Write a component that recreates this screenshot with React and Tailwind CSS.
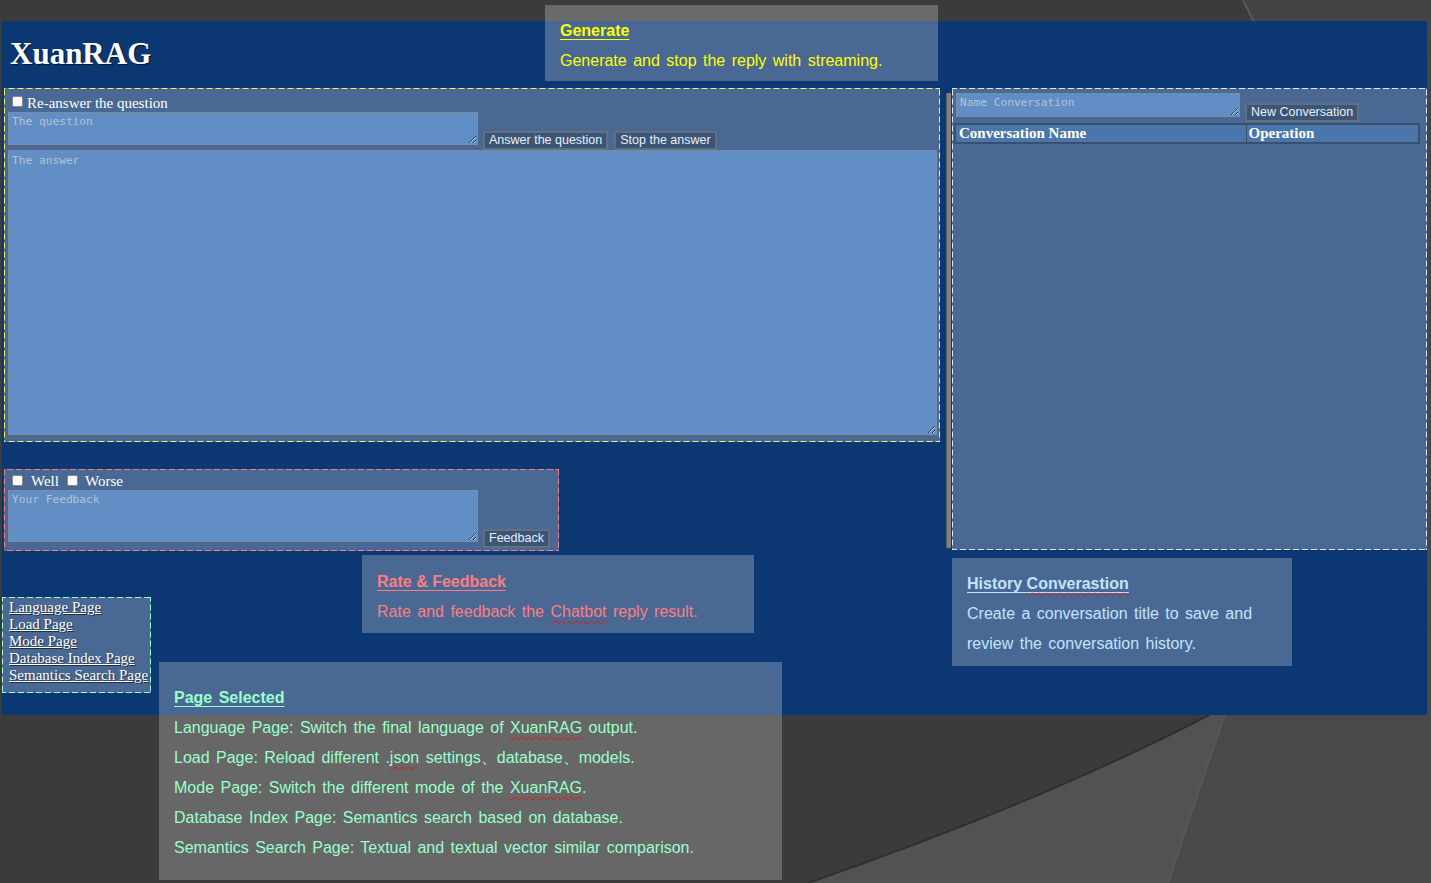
import React from "react";

function Checkbox() {
  return (
    <span className="inline-block w-[11px] h-[11px] bg-white border border-[#8a8a8a] rounded-[2px] shrink-0" />
  );
}

function GrayButton({ children, className }) {
  return (
    <button
      className={
        "h-[19px] px-[4px] bg-[#3b5577] border-2 border-[#636f7e] text-[#e8eef6] font-['Liberation_Sans',Arial,sans-serif] text-[12.5px] leading-none whitespace-nowrap " +
        className
      }
    >
      {children}
    </button>
  );
}

function Wavy({ children }) {
  return (
    <span className="underline decoration-wavy decoration-[#e01818] decoration-1 underline-offset-[3px]">
      {children}
    </span>
  );
}

function SlideBackground() {
  return (
    <svg className="absolute inset-0" width="1431" height="883" viewBox="0 0 1431 883">
      <defs>
        <linearGradient id="rightArc" x1="0" y1="0" x2="0" y2="1">
          <stop offset="0" stopColor="#434343" />
          <stop offset="1" stopColor="#4a4a4a" />
        </linearGradient>
      </defs>
      <rect width="1431" height="883" fill="#3b3b3b" />
      <path d="M 808 883 C 955 832 1100 772 1215 712 L 1431 600 L 1431 883 Z" fill="#525252" />
      <path d="M 808 883 C 955 832 1100 772 1215 712" fill="none" stroke="#303030" strokeWidth="2" />
      <path
        d="M 1243 0 C 1400 300 1330 560 1225 715 Q 1195 800 1168 883 L 1431 883 L 1431 0 Z"
        fill="url(#rightArc)"
      />
      <path
        d="M 1243 0 C 1400 300 1330 560 1225 715 Q 1195 800 1168 883"
        fill="none"
        stroke="#575757"
        strokeWidth="2"
      />
    </svg>
  );
}

const pageLinks = [
  "Language Page",
  "Load Page",
  "Mode Page",
  "Database Index Page",
  "Semantics Search Page"
];

const areaClass =
  "block bg-[#618fc5] border border-[#7a8ca6] font-['DejaVu_Sans_Mono',monospace] text-[11.2px] leading-[13px] px-[3px] text-white placeholder:text-[#b3c2d4] outline-none";

export default function App() {
  return (
    <div className="relative w-[1431px] h-[883px] overflow-hidden bg-[#3b3b3b]">
      <SlideBackground />

      {/* screenshot of the app */}
      <div className="relative mt-[21px] ml-[2px] w-[1425px] h-[694px] bg-[#0b3772] font-['Liberation_Serif',serif] text-white">
        <div className="h-[67px] flex items-center pl-[8px]">
          <h1 className="text-[31px] font-bold [text-shadow:1px_1px_1px_rgba(0,0,0,0.6)]">
            XuanRAG
          </h1>
        </div>

        <div className="flex">
          {/* left column */}
          <div className="w-[938px] pl-[2px] flex flex-col">
            <div className="w-[936px] h-[354px] p-[1px] pl-[4px] [background:linear-gradient(90deg,#f2f25e_6px,transparent_6px)_top/9px_1px_repeat-x,linear-gradient(90deg,#f2f25e_6px,transparent_6px)_bottom/9px_1px_repeat-x,linear-gradient(#f2f25e_6px,transparent_6px)_left/1px_9px_repeat-y,linear-gradient(#f2f25e_6px,transparent_6px)_right/1px_9px_repeat-y,#496994]">
              <label className="flex items-start gap-[4px] ml-[4px] pt-[6px] h-[23px] text-[15px] leading-[17px]">
                <span className="mt-[1px] flex">
                  <Checkbox />
                </span>
                Re-answer the question
              </label>
              <div className="flex h-[38px]">
                <textarea placeholder="The question" className={areaClass + " w-[470px] h-[33px] py-[2px]"} />
                <GrayButton className="mt-[19px] ml-[5px]">Answer the question</GrayButton>
                <GrayButton className="mt-[19px] ml-[6px]">Stop the answer</GrayButton>
              </div>
              <textarea placeholder="The answer" className={areaClass + " w-[929px] h-[285px] py-[3px]"} />
            </div>

            <div className="mt-[27px] w-[555px] h-[82px] p-[1px] pl-[4px] [background:linear-gradient(90deg,#ff7c80_6px,transparent_6px)_top/9px_1px_repeat-x,linear-gradient(90deg,#ff7c80_6px,transparent_6px)_bottom/9px_1px_repeat-x,linear-gradient(#ff7c80_6px,transparent_6px)_left/1px_9px_repeat-y,linear-gradient(#ff7c80_6px,transparent_6px)_right/1px_9px_repeat-y,#496994]">
              <div className="flex items-start ml-[4px] pt-[3px] h-[20px] text-[15px] leading-[17px]">
                <span className="mt-[2px] flex">
                  <Checkbox />
                </span>
                <span className="ml-[8px]">Well</span>
                <span className="mt-[2px] ml-[8px] flex">
                  <Checkbox />
                </span>
                <span className="ml-[7px]">Worse</span>
              </div>
              <div className="flex">
                <textarea placeholder="Your Feedback" className={areaClass + " w-[470px] h-[52px] py-[2px]"} />
                <GrayButton className="mt-[39px] ml-[5px]">Feedback</GrayButton>
              </div>
            </div>

            <div className="mt-[46px] -ml-[2px] w-[149px] h-[96px] pl-[7px] pt-[2px] text-[15px] leading-[17px] [background:linear-gradient(90deg,#99ffcc_6px,transparent_6px)_top/9px_1px_repeat-x,linear-gradient(90deg,#99ffcc_6px,transparent_6px)_bottom/9px_1px_repeat-x,linear-gradient(#99ffcc_6px,transparent_6px)_left/1px_9px_repeat-y,linear-gradient(#99ffcc_6px,transparent_6px)_right/1px_9px_repeat-y,#496994]">
              {pageLinks.map((name) => (
                <a
                  key={name}
                  href="#"
                  className="block underline whitespace-nowrap [text-shadow:1px_1px_1px_rgba(0,0,0,0.55)]"
                >
                  {name}
                </a>
              ))}
            </div>
          </div>

          {/* right column */}
          <div className="ml-[6px] mt-[5px] w-[5px] h-[455px] bg-[#808080] border-l border-[#5a5a5a]" />
          <div className="ml-[1px] w-[475px] h-[462px] p-[1px] [background:linear-gradient(90deg,#dfe8f2_6px,transparent_6px)_top/9px_1px_repeat-x,linear-gradient(90deg,#dfe8f2_6px,transparent_6px)_bottom/9px_1px_repeat-x,linear-gradient(#dfe8f2_6px,transparent_6px)_left/1px_9px_repeat-y,linear-gradient(#dfe8f2_6px,transparent_6px)_right/1px_9px_repeat-y,#496994]">
            <div className="flex pl-[3px] pt-[4px] h-[34px]">
              <textarea placeholder="Name Conversation" className={areaClass + " w-[284px] h-[24px] py-[2px]"} />
              <GrayButton className="mt-[10px] ml-[5px]">New Conversation</GrayButton>
            </div>
            <table className="ml-[1px] w-[466px] border-collapse border-2 border-[#3a4f6e] text-[15px] leading-[15px] font-bold">
              <thead>
                <tr className="h-[19px] bg-[#4a76ab]">
                  <th className="w-[291px] text-left pl-[3px] border-r border-[#3a4f6e]">
                    Conversation Name
                  </th>
                  <th className="text-left pl-[2px]">Operation</th>
                </tr>
              </thead>
            </table>
          </div>
        </div>
      </div>

      {/* slide callouts */}
      <div className="absolute left-[545px] top-[5px] w-[393px] h-[76px] bg-[linear-gradient(to_bottom,#6a6a6a_16px,#496994_16px)] pl-[15px] pt-[11px] text-[#ffff00] font-['Liberation_Sans',Arial,sans-serif] text-[16px] leading-[30px] [word-spacing:2px]">
        <div className="font-bold underline underline-offset-[3px]">Generate</div>
        <div>Generate and stop the reply with streaming.</div>
      </div>

      <div className="absolute left-[362px] top-[555px] w-[392px] h-[78px] bg-[#496994] pl-[15px] pt-[12px] text-[#ff7c80] font-['Liberation_Sans',Arial,sans-serif] text-[16px] leading-[30px] [word-spacing:2px]">
        <div className="font-bold underline underline-offset-[3px] [word-spacing:0px]">Rate &amp; Feedback</div>
        <div>
          Rate and feedback the <Wavy>Chatbot</Wavy> reply result.
        </div>
      </div>

      <div className="absolute left-[952px] top-[558px] w-[340px] h-[108px] bg-[#496994] pl-[15px] pt-[11px] text-[#c2e3ff] font-['Liberation_Sans',Arial,sans-serif] text-[16px] leading-[30px] [word-spacing:2px]">
        <div className="font-bold underline underline-offset-[3px] [word-spacing:0px]">
          History <Wavy>Converastion</Wavy>
        </div>
        <div>Create a conversation title to save and</div>
        <div>review the conversation history.</div>
      </div>

      <div className="absolute left-[159px] top-[662px] w-[623px] h-[218px] bg-[linear-gradient(to_bottom,#496994_53px,#676767_53px)] pl-[15px] pt-[21px] text-[#99ffcc] font-['Liberation_Sans',Arial,sans-serif] text-[16px] leading-[30px] [word-spacing:2px]">
        <div className="font-bold underline underline-offset-[3px]">Page Selected</div>
        <div>
          Language Page: Switch the final language of <Wavy>XuanRAG</Wavy> output.
        </div>
        <div>
          Load Page: Reload different .<Wavy>json</Wavy> settings、database、models.
        </div>
        <div>
          Mode Page: Switch the different mode of the <Wavy>XuanRAG</Wavy>.
        </div>
        <div>Database Index Page: Semantics search based on database.</div>
        <div>Semantics Search Page: Textual and textual vector similar comparison.</div>
      </div>
    </div>
  );
}
